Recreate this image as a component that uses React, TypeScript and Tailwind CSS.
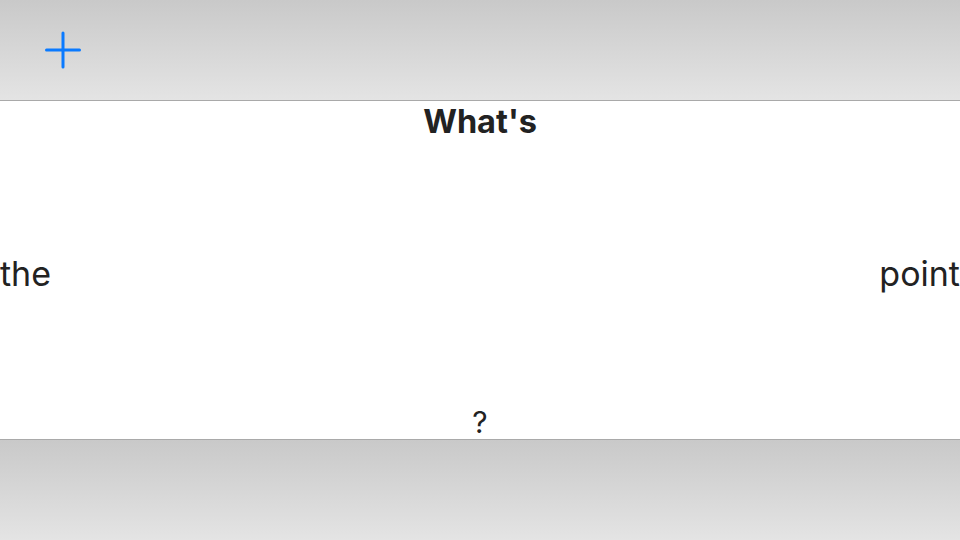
export default function App() {
  return (
    <div
      className="w-[960px] h-[540px] flex flex-col bg-white text-[#222222] overflow-hidden"
      style={{ fontFamily: "Inter, 'Noto Sans', sans-serif" }}
    >
      <header className="h-[101px] flex items-center px-[45px] bg-gradient-to-b from-[#c9c9c9] to-[#e4e4e4] border-b border-[#a9a9a9]">
        <button className="text-[#0a7aff]">
          <svg width="36" height="38" viewBox="0 0 36 38" fill="none" stroke="currentColor" strokeWidth="3" strokeLinecap="round">
            <path d="M18 2v34M1.5 19h33" />
          </svg>
        </button>
      </header>

      <main className="flex-1 flex flex-col justify-between">
        <div className="text-center text-[32.5px] font-bold leading-[42px]">What's</div>
        <div className="flex justify-between text-[34px] leading-[40px]">
          <span>the</span>
          <span>point</span>
        </div>
        <div className="text-center text-[30px] leading-[34px]">?</div>
      </main>

      <footer className="h-[101px] bg-gradient-to-b from-[#c9c9c9] to-[#e4e4e4] border-t border-[#a9a9a9]" />
    </div>
  );
}
